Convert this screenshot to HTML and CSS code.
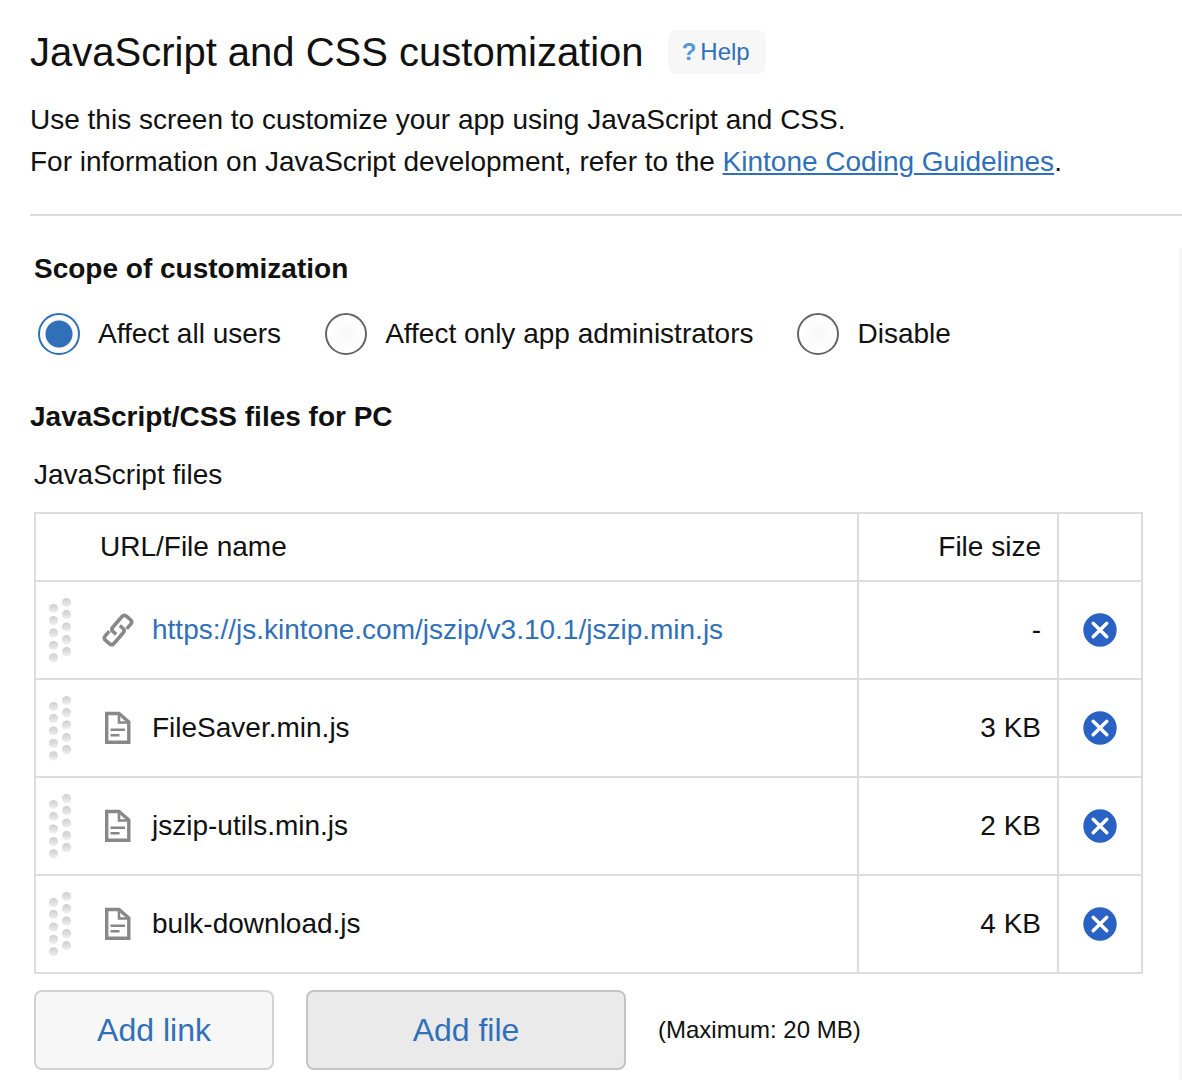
FILE: index.html
```html
<!DOCTYPE html>
<html lang="en">
<head>
<meta charset="utf-8">
<meta name="viewport" content="width=device-width, initial-scale=1">
<title>JavaScript and CSS customization</title>
<link rel="stylesheet" href="styles.css">
</head>
<body>
<svg class="sprite" aria-hidden="true">
  <defs>
    <linearGradient id="dot" x1="0" y1="0" x2="0" y2="1">
      <stop offset="0" stop-color="#cdcdcd"/>
      <stop offset="1" stop-color="#f0f0f0"/>
    </linearGradient>
    <symbol id="grip" viewBox="0 0 24 66">
      <g fill="url(#dot)">
        <circle cx="5.5" cy="11.5" r="4.6"/><circle cx="5.5" cy="23.5" r="4.6"/><circle cx="5.5" cy="36" r="4.6"/><circle cx="5.5" cy="48.5" r="4.6"/><circle cx="5.5" cy="60.8" r="4.6"/>
        <circle cx="18.5" cy="5.5" r="4.6"/><circle cx="18.5" cy="17.7" r="4.6"/><circle cx="18.5" cy="30" r="4.6"/><circle cx="18.5" cy="42.7" r="4.6"/><circle cx="18.5" cy="54.7" r="4.6"/>
      </g>
    </symbol>
    <symbol id="file" viewBox="0 0 36 36">
      <path d="M6.7 3.5H19L28.8 12V32.3H6.7Z" fill="none" stroke="#888" stroke-width="3.4"/>
      <path d="M19 4V12.5H28.5" fill="none" stroke="#888" stroke-width="2.6"/>
      <path d="M10.5 19.7H25M10.5 25.3H19.5" fill="none" stroke="#888" stroke-width="2.4"/>
    </symbol>
    <symbol id="chain" viewBox="0 0 36 36">
      <g transform="translate(18 18) rotate(-49)" fill="none" stroke="#888" stroke-width="3.6">
        <path d="M-6.5 -5.8H-12.5Q-16 -5.8 -16 -2.5V2.5Q-16 5.8 -12.5 5.8H1Q4.500 5.800 4.500 2.500V-1.500"/>
        <path d="M6.5 5.8H12.5Q16 5.8 16 2.5V-2.5Q16 -5.8 12.5 -5.8H-1Q-4.5 -5.8 -4.5 -2.5V1.5"/>
      </g>
    </symbol>
    <symbol id="remove" viewBox="0 0 34 34">
      <circle cx="17" cy="17" r="16.7" fill="#2962c4"/>
      <path d="M10.2 10.2L23.8 23.8M23.8 10.2L10.2 23.8" stroke="#fff" stroke-width="3.4" stroke-linecap="round"/>
    </symbol>
  </defs>
</svg>

<main class="page">
  <header class="page-header">
    <div class="title-row">
      <h1 class="title">JavaScript and CSS customization</h1>
      <a class="help" href="#help"><span class="help-mark">?</span>Help</a>
    </div>
    <p class="intro">Use this screen to customize your app using JavaScript and CSS.<br>For information on JavaScript development, refer to the <a class="link underlined" href="#guidelines">Kintone Coding Guidelines</a>.</p>
  </header>

  <div class="content">
    <fieldset class="scope">
      <legend class="scope-title">Scope of customization</legend>
      <div class="options">
        <label class="option"><input class="radio" type="radio" name="scope" checked>Affect all users</label>
        <label class="option"><input class="radio" type="radio" name="scope">Affect only app administrators</label>
        <label class="option"><input class="radio" type="radio" name="scope">Disable</label>
      </div>
    </fieldset>

    <h2 class="section-title">JavaScript/CSS files for PC</h2>
    <div class="files">
      <h3 class="files-title" id="js-files">JavaScript files</h3>
      <table class="table" aria-labelledby="js-files">
        <thead>
          <tr><th class="name" scope="col">URL/File name</th><th class="size" scope="col">File size</th><td class="action"></td></tr>
        </thead>
        <tbody>
          <tr>
            <td class="name"><div class="entry"><svg class="grip"><use href="#grip"/></svg><svg class="icon"><use href="#chain"/></svg><a class="link" href="#jszip">https://js.kintone.com/jszip/v3.10.1/jszip.min.js</a></div></td>
            <td class="size">-</td>
            <td class="action"><button class="remove" type="button" aria-label="Remove jszip.min.js"><svg class="remove-icon"><use href="#remove"/></svg></button></td>
          </tr>
          <tr>
            <td class="name"><div class="entry"><svg class="grip"><use href="#grip"/></svg><svg class="icon"><use href="#file"/></svg>FileSaver.min.js</div></td>
            <td class="size">3 KB</td>
            <td class="action"><button class="remove" type="button" aria-label="Remove FileSaver.min.js"><svg class="remove-icon"><use href="#remove"/></svg></button></td>
          </tr>
          <tr>
            <td class="name"><div class="entry"><svg class="grip"><use href="#grip"/></svg><svg class="icon"><use href="#file"/></svg>jszip-utils.min.js</div></td>
            <td class="size">2 KB</td>
            <td class="action"><button class="remove" type="button" aria-label="Remove jszip-utils.min.js"><svg class="remove-icon"><use href="#remove"/></svg></button></td>
          </tr>
          <tr>
            <td class="name"><div class="entry"><svg class="grip"><use href="#grip"/></svg><svg class="icon"><use href="#file"/></svg>bulk-download.js</div></td>
            <td class="size">4 KB</td>
            <td class="action"><button class="remove" type="button" aria-label="Remove bulk-download.js"><svg class="remove-icon"><use href="#remove"/></svg></button></td>
          </tr>
        </tbody>
      </table>
      <div class="actions">
        <button class="button" type="button">Add link</button>
        <button class="button button-active" type="button">Add file</button>
        <span class="limit">(Maximum: 20 MB)</span>
      </div>
    </div>
  </div>
</main>
</body>
</html>
```
FILE: styles.css
```css
* {
  box-sizing: border-box;
}

body {
  margin: 0;
  background: #fff;
  color: #111;
  font-family: "Liberation Sans", Arial, Helvetica, sans-serif;
  font-size: 28px;
  line-height: 42px;
}

h1, h2, h3, p {
  margin: 0;
}

.sprite {
  position: absolute;
  width: 0;
  height: 0;
}

.page {
  padding: 30px 0 0 30px;
}

.page-header {
  padding-bottom: 31px;
  border-bottom: 2px solid #ddd;
}

.title-row {
  display: flex;
  align-items: center;
  gap: 24px;
  margin-bottom: 25px;
}

.title {
  font-size: 40px;
  font-weight: 400;
  line-height: 44px;
}

.help {
  display: flex;
  gap: 4px;
  padding: 0 16px 0 14px;
  border-radius: 8px;
  background: #f7f7f7;
  color: #3070b8;
  font-size: 24px;
  line-height: 44px;
  text-decoration: none;
}

.help-mark {
  color: #5599dc;
  font-weight: 700;
}

.link {
  color: #3070b8;
  text-decoration: none;
}

.underlined {
  text-decoration: underline;
  text-decoration-thickness: 2px;
  text-underline-offset: 2px;
}

.content {
  margin-top: 32px;
  padding-right: 36px;
  border-right: 3px solid #f7f7f7;
}

.scope {
  margin: 0 0 40px 4px;
  padding: 0;
  border: 0;
}

.scope-title {
  padding: 0;
  margin-bottom: 22px;
  font-weight: 700;
}

.options {
  display: flex;
  flex-wrap: wrap;
  gap: 44px;
  padding-left: 4px;
}

.option {
  display: flex;
  align-items: center;
  gap: 18px;
  line-height: 44px;
}

.radio {
  appearance: none;
  width: 42px;
  height: 42px;
  margin: 0;
  border: 2px solid #666;
  border-radius: 50%;
  background: radial-gradient(circle, #f8f8f8, #fff 70%);
}

.radio:checked {
  border-color: #3070b8;
  background: radial-gradient(circle, #3070b8 13px, #f8f8f8 14px, #fff 19px);
}

.section-title {
  margin-bottom: 16px;
  font-size: 28px;
  font-weight: 700;
}

.files {
  padding-left: 4px;
}

.files-title {
  margin-bottom: 16px;
  font-size: 28px;
  font-weight: 400;
}

.table {
  width: 100%;
  border-collapse: collapse;
  table-layout: fixed;
}

.table th,
.table td {
  height: 98px;
  padding: 0 16px;
  border: 2px solid #ddd;
  font-weight: 400;
}

.table thead th,
.table thead td {
  height: 68px;
}

.table th.name {
  padding-left: 64px;
  text-align: left;
}

.table td.name {
  padding-left: 12px;
}

.table .size {
  width: 200px;
  text-align: right;
}

.table .action {
  width: 84px;
  padding: 0;
  text-align: center;
}

.entry {
  display: flex;
  align-items: center;
}

.grip {
  width: 24px;
  height: 66px;
  margin-right: 28px;
}

.icon {
  width: 36px;
  height: 36px;
  margin-right: 16px;
}

.remove {
  display: block;
  width: 34px;
  height: 34px;
  margin: 0 auto;
  padding: 0;
  border: 0;
  background: none;
  cursor: pointer;
}

.remove-icon {
  display: block;
  width: 34px;
  height: 34px;
}

.actions {
  display: flex;
  align-items: center;
  gap: 32px;
  padding: 16px 0 10px;
}

.button {
  width: 240px;
  height: 80px;
  border: 2px solid #d2d2d2;
  border-radius: 8px;
  background: #f7f7f7;
  color: #3070b8;
  font: inherit;
  font-size: 32px;
  cursor: pointer;
}

.button-active {
  width: 320px;
  border-color: #c4c4c4;
  background: #eaeaea;
}

.limit {
  font-size: 24px;
}
```
